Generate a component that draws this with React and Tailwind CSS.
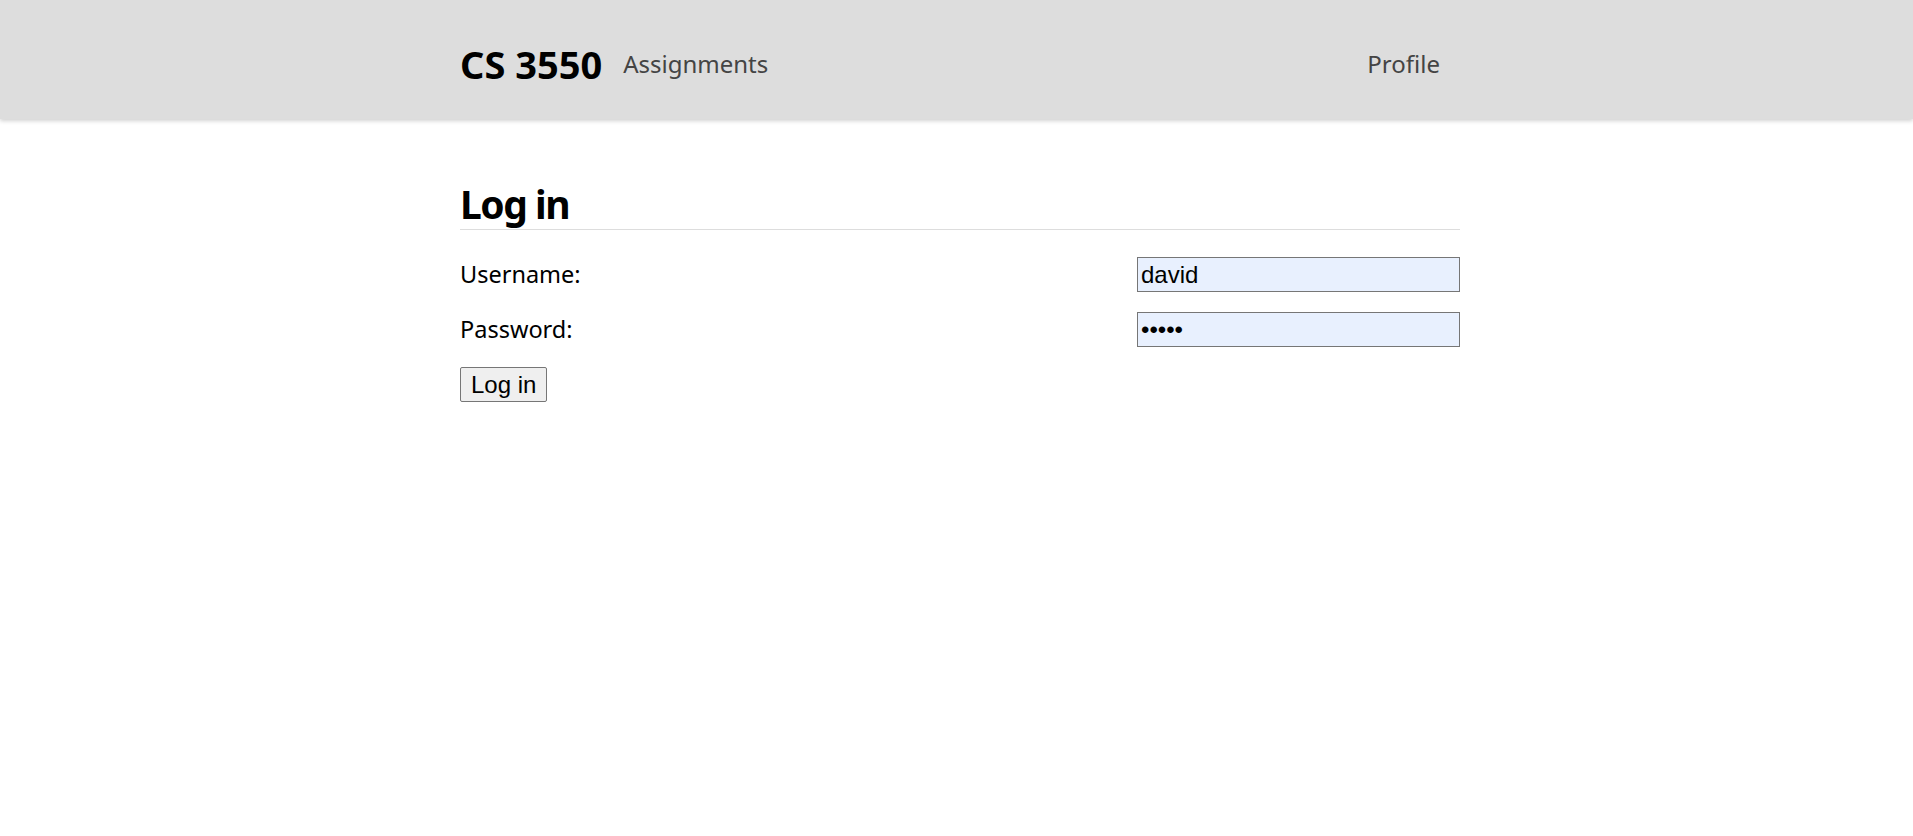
import React, { useState } from "react";

const App = () => {
  const [formData, setFormData] = useState({ username: "david", password: "david" });

  const handleChange = (e) => {
    const { name, value } = e.target;
    setFormData((prev) => ({ ...prev, [name]: value }));
  };

  return (
    <div className="min-h-screen bg-white font-['Noto_Sans',sans-serif] text-black">
      <header className="h-[119px] bg-[#dddddd] shadow-[0_2px_4px_rgba(0,0,0,0.18)]">
        <nav className="mx-auto flex h-full w-[1007px] items-center justify-between pl-[7px] pr-5 pt-[9px]">
          <div className="flex items-center gap-[21px]">
            <span className="text-[38px] font-bold leading-none">CS 3550</span>
            <a className="text-[24px] leading-none text-[#444]">Assignments</a>
          </div>
          <a className="text-[24px] leading-none text-[#444]">Profile</a>
        </nav>
      </header>

      <main className="mx-auto w-[1007px] pl-[7px] pt-[61px]">
        <h1 className="border-b border-[#dddddd] pb-[1px] text-[39px] font-bold leading-[48px] tracking-[-1.5px]">
          Log in
        </h1>

        <form className="mt-[27px] flex flex-col gap-5" onSubmit={(e) => e.preventDefault()}>
          <div className="flex items-center justify-between">
            <label className="text-[23.5px] leading-none">Username:</label>
            <input
              type="text"
              name="username"
              value={formData.username}
              onChange={handleChange}
              className="h-[35px] w-[323px] border border-[#767676] bg-[#e8f0fe] px-[3px] font-['Liberation_Sans',Arial,sans-serif] text-[24px]"
            />
          </div>
          <div className="flex items-center justify-between">
            <label className="text-[23.5px] leading-none">Password:</label>
            <input
              type="password"
              name="password"
              value={formData.password}
              onChange={handleChange}
              className="h-[35px] w-[323px] border border-[#767676] bg-[#e8f0fe] px-[3px] font-['Liberation_Sans',Arial,sans-serif] text-[24px]"
            />
          </div>
          <div>
            <button
              type="submit"
              className="h-[35px] rounded-[2px] border border-[#767676] bg-[#efefef] px-[10px] font-['Liberation_Sans',Arial,sans-serif] text-[24px] leading-none"
            >
              Log in
            </button>
          </div>
        </form>
      </main>
    </div>
  );
};

export default App;
